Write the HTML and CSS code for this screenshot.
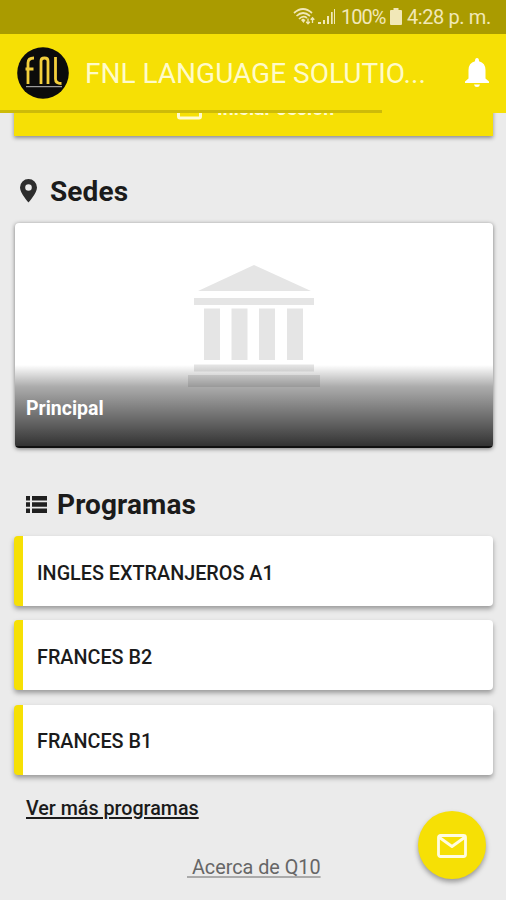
FILE: index.html
```html
<!DOCTYPE html>
<html lang="es">
<head>
<meta charset="utf-8">
<title>FNL Language Solutions</title>
<link rel="stylesheet" href="styles.css">
</head>
<body>
<div class="status">
  <svg class="wifi" width="23" height="20" viewBox="0 0 23 20" fill="none" stroke="#f1e8b8" stroke-width="1.7"><path d="M1 6Q10-2 19 6M3.500 9Q10 3 17 9M6 12Q10 8 14 11"/><path d="M8 13l2-1.500 2.500 1.500L10.500 16z" fill="#f1e8b8" stroke="none"/><path d="M15 11.500v5M13.200 14.800l1.800 2 1.800-2M19.500 16v-5M17.700 12.800l1.800-2 1.800 2" stroke-width="1.300"/></svg>
  <svg class="signal" width="18" height="18" viewBox="0 0 18 18" fill="#f1e8b8"><path d="M0 14h3v2H0zM5 12h2v4H5zM9 8h2v8H9zM13 4h1.700v12H13zM16 1h1v15h-1z"/></svg>
  <span class="percent">100%</span>
  <svg class="battery" width="12" height="18" viewBox="0 0 12 18" fill="#f1e8b8"><path d="M3.500 0h5v2H11q1 0 1 1v13q0 1-1 1H1q-1 0-1-1V3q0-1 1-1h2.500z"/></svg>
  <span class="clock">4:28 p. m.</span>
</div>
<header class="bar">
  <svg class="logo" width="52" height="52" viewBox="0 0 52 52"><circle cx="26" cy="26" r="25.800" fill="#0b0b0b"/><g fill="none" stroke="#f3cf3c" stroke-width="2.800"><path d="M11 37V16q0-5 6-5M8.500 22h8M24 37V14q0-3 3.500-3t3.500 3v23M38.500 10v22q0 4.500 6 4.500"/></g><path d="M9 39.700h36" stroke="#bdbdbd" stroke-width="1"/></svg>
  <h1 class="title">FNL LANGUAGE SOLUTIO...</h1>
  <svg class="bell" width="24" height="30" viewBox="0 0 24 30" fill="#fff"><path d="M12 0q2 0 2 3.200Q20.500 5 20.500 12v8.500L24 23.500V25H0v-1.500l3.500-3V12Q3.500 5 10 3.200 10 0 12 0zM9 26.500h6q-.5 2.500-3 2.500t-3-2.500z"/></svg>
</header>
<main class="page">
  <div class="login">
    <svg width="25" height="24" viewBox="0 0 25 24" fill="none" stroke="#fffbd0" stroke-width="3"><rect x="1.500" y="1.500" width="22" height="20.500" rx="1.500"/><path d="M7 12h11M12 8l6 4-6 4"/></svg>
    <span class="login-text">Iniciar sesión</span>
  </div>
  <h2 class="heading places">
    <svg width="17" height="24" viewBox="0 0 17 24" fill="#2d2d2d"><path fill-rule="evenodd" d="M8.500 0A8.500 8.500 0 0 0 0 8.500C0 14 8.500 23.500 8.500 23.500S17 14 17 8.500A8.500 8.500 0 0 0 8.500 0zm0 5.200a3.300 3.300 0 1 1 0 6.600 3.300 3.300 0 0 1 0-6.600z"/></svg>
    <span>Sedes</span>
  </h2>
  <section class="campus">
    <svg class="building" width="134" height="123" viewBox="0 0 134 123" fill="#e5e5e5"><path d="M67 0L124 26H11zM7 33h120v7H7zM17 43.500h16v51.500H17zM44.500 43.500h16v51.500h-16zM72 43.500h16v51.500H72zM100 43.500h16v51.500h-16zM7 99.500h120v7H7zM1 110h132v12H1z"/></svg>
    <div class="shade"><span>Principal</span></div>
  </section>
  <h2 class="heading programs">
    <svg width="21" height="17" viewBox="0 0 21 17" fill="#202020"><path d="M0 0h4v4.500H0zM6 0h15v4.500H6zM0 6.200h4v4.500H0zM6 6.200h15v4.500H6zM0 12.400h4v4.500H0zM6 12.400h15v4.500H6z"/></svg>
    <span>Programas</span>
  </h2>
  <ul class="list">
    <li class="item"><span>INGLES EXTRANJEROS A1</span></li>
    <li class="item"><span>FRANCES B2</span></li>
    <li class="item"><span>FRANCES B1</span></li>
  </ul>
  <div class="more"><a class="more-link">Ver más programas</a></div>
  <footer class="about"><a class="about-link">&nbsp;Acerca de Q10</a></footer>
</main>
<div class="fab"><svg width="30" height="24" viewBox="0 0 30 24" fill="none" stroke="#fffce0" stroke-width="2.800" stroke-linejoin="round"><rect x="1.500" y="1.500" width="27" height="21" rx="2"/><path d="M2.500 3.500L15 12.500 27.500 3.500"/></svg></div>
</body>
</html>
```
FILE: styles.css
```css
* { box-sizing: border-box; }
body { margin: 0; width: 506px; height: 900px; overflow: hidden; position: relative; background: #ebebeb; font-family: Roboto, "Liberation Sans", sans-serif; color: #1b1b1b; }
svg { display: block; flex: none; }
span, a { white-space: nowrap; }
.status { height: 34px; background: #aa9b00; display: flex; align-items: center; padding-left: 293px; color: #f1e8b8; font-size: 20px; line-height: 36px; }
.wifi { margin-right: 2px; }
.percent { width: 45px; margin-left: 5px; letter-spacing: -1px; }
.battery { margin: 0 5px 0 4px; }
.clock { letter-spacing: -0.4px; }
.bar { height: 79px; background: #f6e005; display: flex; align-items: center; padding: 2px 17px 0 17px; border: 0 solid; border-image: linear-gradient(90deg, #cdbb09 380px, #f6e005 380px) 3; border-width: 0 0 3px; }
.title { margin: 0 0 0 16px; padding-top: 2px; width: 352px; font-size: 28px; font-weight: 400; line-height: 40px; color: #fffbc9; white-space: nowrap; }
.bell { margin-left: 28px; }
.page { height: 787px; overflow: hidden; padding: 0 13px 0 14px; }
.login { height: 52px; margin-top: -29px; background: #f6e005; box-shadow: 0 2px 4px rgba(0,0,0,.4); display: flex; align-items: center; padding: 0 0 4px 163px; gap: 15px; color: #fffbd0; font-size: 19.500px; font-weight: 700; }
.heading { margin: 0; display: flex; align-items: center; font-size: 28px; font-weight: 700; line-height: 36px; height: 36px; }
.heading span { padding-top: 2px; letter-spacing: 0.1px; }
.places { margin-top: 37px; padding-left: 6px; gap: 13px; }
.campus { height: 225px; margin: 14px 0 0 1px; background: #fff; border-radius: 4px; box-shadow: 0 1px 4px rgba(0,0,0,.5); overflow: hidden; position: relative; display: flex; justify-content: center; padding-top: 42px; }
.shade { position: absolute; left: 0; right: 0; bottom: 0; height: 83px; padding: 32px 0 0 11px; background: linear-gradient(rgba(0,0,0,0), rgba(0,0,0,.33) 27%, rgba(0,0,0,.8)); border-bottom: 2px solid #111; color: #fff; font-size: 19.500px; font-weight: 700; line-height: 24px; }
.programs { margin-top: 38px; padding-left: 12px; gap: 10px; }
.list { list-style: none; margin: 14px 0 0; padding: 0; display: grid; gap: 14.300px; }
.item { height: 70px; background: #fff; border-left: 9px solid #f6e005; border-radius: 4px; box-shadow: 0 3px 5px rgba(0,0,0,.35); display: flex; align-items: center; padding: 4px 0 0 14px; font-size: 19.800px; font-weight: 500; }
.more { margin-top: 22px; padding-left: 12px; font-size: 19.700px; font-weight: 500; line-height: 24px; }
.more-link { text-decoration: underline; text-decoration-thickness: 2px; text-underline-offset: 2px; }
.about { margin-top: 35px; padding-left: 173px; font-size: 19.800px; line-height: 24px; color: #666; }
.about-link { text-decoration: underline; text-decoration-color: #aaa; text-decoration-thickness: 2px; text-underline-offset: 2px; text-decoration-skip-ink: none; }
.fab { position: absolute; left: 418px; top: 811px; width: 68px; height: 68px; border-radius: 50%; background: #f6e005; box-shadow: 0 3px 5px rgba(0,0,0,.35); display: flex; align-items: center; justify-content: center; padding-top: 2px; }
```
